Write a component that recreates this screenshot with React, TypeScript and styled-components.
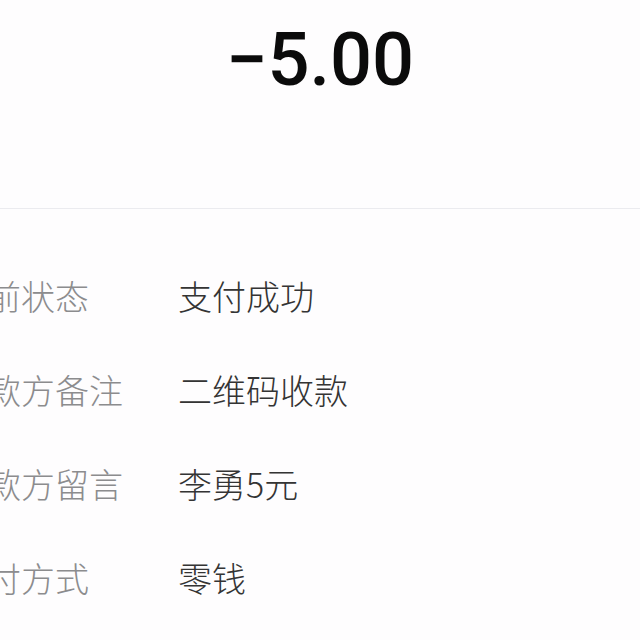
import React from "react";
import styled, { createGlobalStyle } from "styled-components";

const Global = createGlobalStyle`
  html, body { margin: 0; padding: 0; background: #fefdfe; }
  body { overflow: hidden; }
`;

const Page = styled.div`
  width: 640px;
  height: 640px;
  overflow: hidden;
  background: #fefdfe;
  font-family: "Noto Sans CJK SC", "Noto Sans", sans-serif;
`;

const Header = styled.div`
  height: 209px;
  box-sizing: border-box;
  padding-top: 23px;
  display: flex;
  justify-content: center;
  border-bottom: 1px solid #ebebef;
`;

const Amount = styled.div`
  font-family: Roboto, "Liberation Sans", sans-serif;
  font-weight: 500;
  font-size: 74px;
  line-height: 74px;
  color: #0b0b0b;
`;

const List = styled.div`
  margin-top: 40px;
  margin-left: -47px;
  display: flex;
  flex-direction: column;
`;

const Row = styled.div`
  display: grid;
  grid-template-columns: 225px 1fr;
  height: 94px;
  align-items: center;
  font-size: 34px;
  font-weight: 300;
  line-height: 94px;
  white-space: nowrap;
`;

const Label = styled.span`
  color: #8c8c8e;
`;

const Value = styled.span`
  color: #343434;
`;

const rows: [string, string][] = [
  ["当前状态", "支付成功"],
  ["收款方备注", "二维码收款"],
  ["收款方留言", "李勇5元"],
  ["支付方式", "零钱"],
];

export default function App() {
  return (
    <Page>
      <Global />
      <Header>
        <Amount>−5.00</Amount>
      </Header>
      <List>
        {rows.map(([l, v]) => (
          <Row key={l}>
            <Label>{l}</Label>
            <Value>{v}</Value>
          </Row>
        ))}
      </List>
    </Page>
  );
}
